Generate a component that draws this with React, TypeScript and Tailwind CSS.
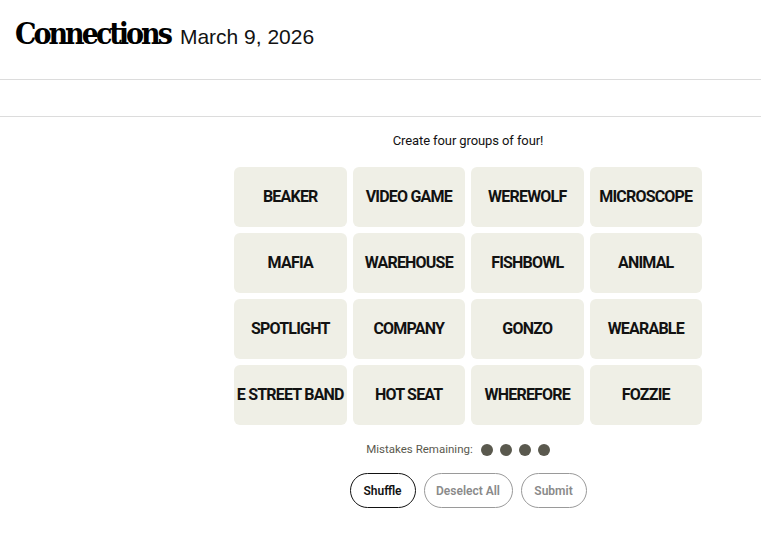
const words = [
  "BEAKER", "VIDEO GAME", "WEREWOLF", "MICROSCOPE",
  "MAFIA", "WAREHOUSE", "FISHBOWL", "ANIMAL",
  "SPOTLIGHT", "COMPANY", "GONZO", "WEARABLE",
  "E STREET BAND", "HOT SEAT", "WHEREFORE", "FOZZIE",
];

export default function App() {
  return (
    <div className="min-h-screen bg-white text-black" style={{ fontFamily: "Roboto, 'Liberation Sans', sans-serif" }}>
      {/* header */}
      <header className="h-[80px] border-b border-[#dcdcdc] flex items-baseline pt-[14px] pl-[15px] gap-[10px]">
        <h1 className="text-[30px] font-bold leading-[40px] tracking-[-3px]" style={{ fontFamily: "'DejaVu Serif Condensed', 'DejaVu Serif', serif" }}>
          Connections
        </h1>
        <span className="text-[21px] leading-[40px] text-[#121212]" style={{ fontFamily: "'Liberation Sans', sans-serif" }}>
          March 9, 2026
        </span>
      </header>
      <div className="h-[37px] border-b border-[#dcdcdc]" />

      {/* game */}
      <main className="ml-[234px] w-[468px] flex flex-col items-center">
        <p className="mt-[15px] text-[13px] leading-[18px] tracking-[-0.1px] text-[#121212]">Create four groups of four!</p>
        <div className="mt-[17px] w-full grid grid-cols-4 gap-[6px]">
          {words.map((w) => (
            <div key={w} className="h-[60px] rounded-[6px] bg-[#efefe6] flex items-center justify-center overflow-hidden">
              <span className="text-[16px] font-bold tracking-[-0.8px] whitespace-nowrap text-[#121212]">{w}</span>
            </div>
          ))}
        </div>
        <div className="mt-[16px] mr-[20px] flex items-center gap-[8px] text-[11.5px] text-[#5a594e]">
          <span>Mistakes Remaining:</span>
          <div className="flex gap-[7px]">
            <span className="w-[12px] h-[12px] rounded-full bg-[#5a594e]" />
            <span className="w-[12px] h-[12px] rounded-full bg-[#5a594e]" />
            <span className="w-[12px] h-[12px] rounded-full bg-[#5a594e]" />
            <span className="w-[12px] h-[12px] rounded-full bg-[#5a594e]" />
          </div>
        </div>
        <div className="mt-[15px] flex gap-[8px] text-[12px] font-semibold">
          <button className="w-[66px] h-[35px] rounded-full border border-[#121212] text-[#121212]">Shuffle</button>
          <button className="w-[89px] h-[35px] rounded-full border border-[#9a9a9a] text-[#8a8a8a]">Deselect All</button>
          <button className="w-[66px] h-[35px] rounded-full border border-[#9a9a9a] text-[#8a8a8a]">Submit</button>
        </div>
      </main>
    </div>
  );
}
